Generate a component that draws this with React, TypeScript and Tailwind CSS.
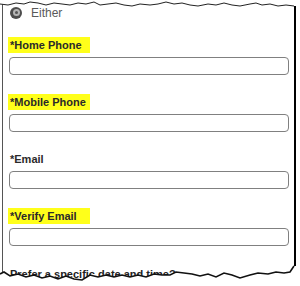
import React from "react";

const Field = ({ label, highlight }: { label: string; highlight: boolean }) => (
  <div className="flex flex-col">
    <div
      className={`h-[16px] w-[82px] pl-[2px] flex items-center text-[11px] font-bold text-[#2a2a2a] ${
        highlight ? "bg-[#ffff1a]" : ""
      }`}
    >
      {label}
    </div>
    <div className="mt-[4px] ml-[1px] h-[18px] rounded-[4px] border-[1.5px] border-[#808080] bg-white" />
  </div>
);

export default function App() {
  return (
    <div
      className="relative w-[300px] h-[286px] bg-white overflow-hidden"
      style={{ fontFamily: '"Liberation Sans", Arial, sans-serif' }}
    >
      <div className="ml-[2px] w-[294px] h-[286px] border-l-[1.5px] border-l-[#555] border-r-[2.5px] border-r-black pl-[5px] pr-[5px]">
        <div className="pt-[6px] h-[19px] flex items-center gap-[9px] pl-[2px]">
          <div className="w-[12px] h-[12px] rounded-full bg-[#4d4d4d] flex items-center justify-center">
            <div className="w-[7px] h-[7px] rounded-full bg-[#b5b5b5] flex items-center justify-center">
              <div className="w-[3px] h-[3px] rounded-full bg-[#555]" />
            </div>
          </div>
          <span className="text-[12px] text-[#5a5a5a]">Either</span>
        </div>
        <div className="mt-[18px] flex flex-col gap-[19px]">
          <Field label="*Home Phone" highlight />
          <Field label="*Mobile Phone" highlight />
          <Field label="*Email" highlight={false} />
          <Field label="*Verify Email" highlight />
        </div>
        <div className="mt-[20px] pl-[2px] text-[11px] font-bold text-[#222]">
          Prefer a specific date and time?
        </div>
      </div>
      <svg
        className="absolute left-0 top-0"
        width="300"
        height="286"
        viewBox="0 0 300 286"
      >
        <path
          d="M0 0 L300 0 L300 6 L294 6 L286 5 L278 6 L270 4 L262 5 L256 3 L250 4 L240 6 L232 5 L224 3 L216 5 L208 4 L198 6 L190 5 L182 3 L174 4 L166 2 L158 4 L150 5 L140 4 L132 6 L124 5 L116 3 L108 4 L100 5 L94 2 L86 4 L78 3 L70 5 L62 4 L54 3 L46 5 L38 3 L30 2 L24 4 L16 3 L8 5 L0 4 Z"
          fill="white"
        />
        <path
          d="M0 4 L8 5 L16 3 L24 4 L30 2 L38 3 L46 5 L54 3 L62 4 L70 5 L78 3 L86 4 L94 2 L100 5 L108 4 L116 3 L124 5 L132 6 L140 4 L150 5 L158 4 L166 2 L174 4 L182 3 L190 5 L198 6 L208 4 L216 5 L224 3 L232 5 L240 6 L250 4 L256 3 L262 5 L270 4 L278 6 L286 5 L294 6"
          fill="none"
          stroke="#222"
          strokeWidth="1"
        />
        <path
          d="M0 286 L300 286 L300 266 L294 266 L290 272 L284 273 L276 272 L268 274 L258 273 L250 275 L240 278 L232 275 L224 273 L216 277 L208 274 L200 276 L192 274 L184 273 L176 272 L170 275 L162 275 L154 274 L146 277 L138 275 L130 277 L122 275 L114 277 L106 275 L98 277 L90 275 L82 280 L74 279 L66 276 L58 279 L50 276 L42 278 L34 275 L26 277 L18 274 L10 276 L4 272 L0 274 Z"
          fill="white"
        />
        <path
          d="M0 274 L4 272 L10 276 L18 274 L26 277 L34 275 L42 278 L50 276 L58 279 L66 276 L74 279 L82 280 L90 275 L98 277 L106 275 L114 277 L122 275 L130 277 L138 275 L146 277 L154 274 L162 275 L170 275 L176 272 L184 273 L192 274 L200 276 L208 274 L216 277 L224 273 L232 275 L240 278 L250 275 L258 273 L268 274 L276 272 L284 273 L290 272 L294 266"
          fill="none"
          stroke="#111"
          strokeWidth="1.6"
        />
      </svg>
    </div>
  );
}
